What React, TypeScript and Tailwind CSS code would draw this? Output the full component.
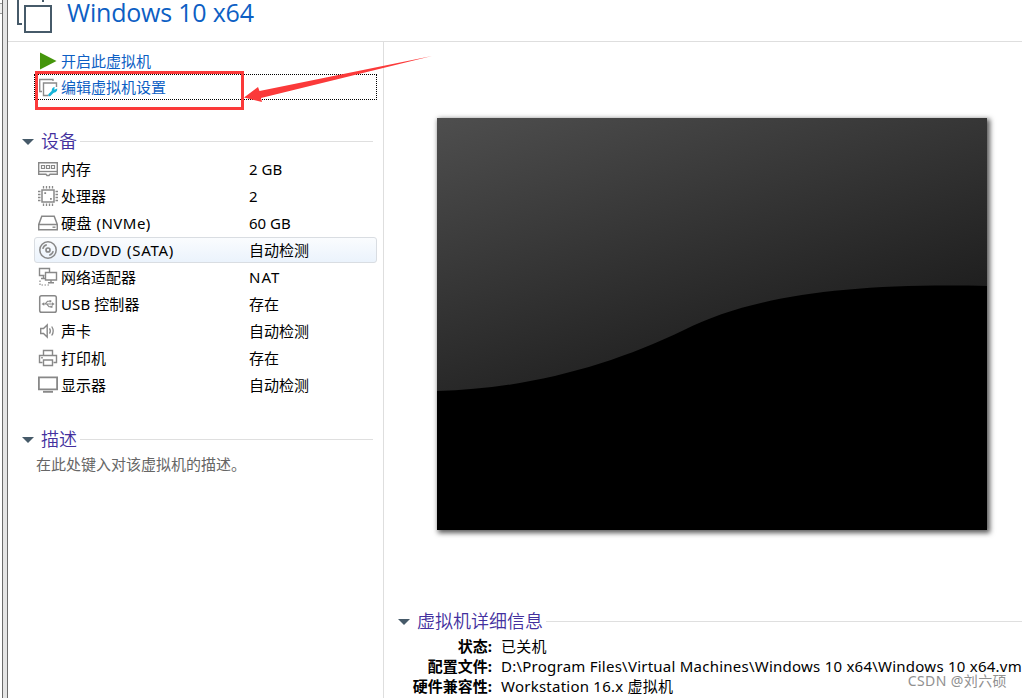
import type { ReactNode } from "react";

const UI_FONT = "font-['Noto_Sans','Noto_Sans_CJK_SC',sans-serif]";

type IconName =
  | "memory"
  | "cpu"
  | "disk"
  | "disc"
  | "network"
  | "usb"
  | "sound"
  | "printer"
  | "display";

interface Device {
  icon: IconName;
  name: string;
  value: string;
  selected?: boolean;
  nameClass?: string;
  valueClass?: string;
}

const devices: Device[] = [
  { icon: "memory", name: "内存", value: "2 GB" },
  { icon: "cpu", name: "处理器", value: "2" },
  { icon: "disk", name: "硬盘 (NVMe)", value: "60 GB", nameClass: "tracking-[0.5px]" },
  {
    icon: "disc",
    name: "CD/DVD (SATA)",
    value: "自动检测",
    selected: true,
    nameClass: "tracking-[0.75px]",
  },
  { icon: "network", name: "网络适配器", value: "NAT", valueClass: "tracking-[1px]" },
  { icon: "usb", name: "USB 控制器", value: "存在", nameClass: "tracking-[0.1px]" },
  { icon: "sound", name: "声卡", value: "自动检测" },
  { icon: "printer", name: "打印机", value: "存在" },
  { icon: "display", name: "显示器", value: "自动检测" },
];

const details = [
  { label: "状态:", value: "已关机" },
  {
    label: "配置文件:",
    value: "D:\\Program Files\\Virtual Machines\\Windows 10 x64\\Windows 10 x64.vm",
  },
  { label: "硬件兼容性:", value: "Workstation 16.x 虚拟机" },
];

const glyphs: Record<IconName, ReactNode> = {
  memory: (
    <>
      <path d="M.7 3.700h18.600v11.600H12l-1 1.200H9l-1-1.200H.7z" strokeWidth="1.4" />
      <path d="M3.500 6.500h3v3h-3zM8.500 6.500h3v3h-3zM13.500 6.500h3v3h-3z" strokeWidth="1.2" />
      <path d="M1 12.500h18" strokeWidth="1.3" />
    </>
  ),
  cpu: (
    <>
      <path d="M4 4h12v12H4z" strokeWidth="1.5" />
      <path
        d="M5.500 0v2.500M8.500 0v2.500M11.500 0v2.500M14.500 0v2.500M5.500 17.500V20M8.500 17.500V20M11.500 17.500V20M14.500 17.500V20M0 5.500h2.500M0 8.500h2.500M0 11.500h2.500M0 14.500h2.500M17.500 5.500H20M17.500 8.500H20M17.500 11.500H20M17.500 14.500H20"
        strokeWidth="1.3"
      />
      <path d="M6.300 6.300h1.800v1.800H6.300zM12 12h1.800v1.800H12z" fill="#888" stroke="none" />
    </>
  ),
  disk: (
    <>
      <path d="M3.800 3.200h12.400l3.100 8.300v5.200H.7v-5.200zM.7 11.500h18.600" strokeWidth="1.5" />
      <path d="M14.500 14.200h3" strokeWidth="1.4" />
    </>
  ),
  disc: (
    <>
      <circle cx="10" cy="10" r="8.200" strokeWidth="1.5" />
      <circle cx="10" cy="10" r="2" strokeWidth="1.7" />
      <path d="M4.800 8.800a5.400 5.400 0 0 1 4-4M15.200 11.200a5.400 5.400 0 0 1-4 4" strokeWidth="1.5" />
    </>
  ),
  network: (
    <>
      <path d="M6.500 8.500h-5v-7h10v3.500M5.500 9v2.500M3 11.500h4" strokeWidth="1.4" />
      <path d="M7.500 5.500h11v7.500h-11zM13 13v3M10 15.800h6" strokeWidth="1.4" />
      <path d="M2 13.500v4.500h10" strokeWidth="1.2" strokeDasharray="1.5 1.5" />
    </>
  ),
  usb: (
    <>
      <rect x="1.700" y="1.700" width="16.600" height="16.600" rx="1.800" strokeWidth="1.5" />
      <path d="M5 10h10M7 10l2.500-2.700h2M8.500 10l2.500 2.700h2" strokeWidth="1.1" />
      <path
        d="m3.500 10 2.700-1.800v3.600zM14 8.300l2.700 1.700-2.700 1.700zM11.300 6.200h2v2h-2zM12.500 11.700h2v2h-2z"
        fill="#888"
        stroke="none"
      />
    </>
  ),
  sound: (
    <>
      <path d="M2.700 7.500h2.800l3.700-3.500v12l-3.700-3.500H2.700z" strokeWidth="1.4" />
      <path d="M11.500 7.300q1.700 2.700 0 5.400M13.700 5.500q3 4.500 0 9" strokeWidth="1.3" />
    </>
  ),
  printer: (
    <>
      <path d="M5.500 7.500v-5h9v5M4.500 14.500h-3v-7h17v7h-3" strokeWidth="1.4" />
      <path d="M5.500 12h9v5.500h-9zM3.200 9.800h1.600" strokeWidth="1.4" />
    </>
  ),
  display: (
    <>
      <path d="M.9 2.400h18.200v12H.9z" strokeWidth="1.8" />
      <path d="M5 16.800h10" strokeWidth="1.900" />
    </>
  ),
};

function DeviceIcon({ name }: { name: IconName }) {
  return (
    <svg viewBox="0 0 20 20" className="h-5 w-5 shrink-0" fill="none" stroke="#888888">
      {glyphs[name]}
    </svg>
  );
}

function SectionTitle({ children }: { children: string }) {
  return (
    <div className="flex h-6 items-center">
      <svg viewBox="0 0 12 6" className="mt-px h-1.5 w-3 shrink-0">
        <path d="M0 0h12L6 6z" fill="#465a69" />
      </svg>
      <h2 className="ml-[7px] shrink-0 text-[18px] leading-6 font-[350] text-[#43309e]">
        {children}
      </h2>
      <div className="ml-[3px] h-px flex-1 bg-[#dfdfdf]" />
    </div>
  );
}

function DeviceRow({ device }: { device: Device }) {
  return (
    <div
      className={
        device.selected
          ? "mb-px flex h-[26px] items-center rounded-[3px] border border-[#d9dde2] bg-linear-to-b from-[#fafcfe] to-[#ebf3fc] pl-[3px]"
          : "mb-px flex h-[26px] items-center pl-1"
      }
    >
      <DeviceIcon name={device.icon} />
      <span className={`ml-[3px] w-[188px] text-[15px] ${device.nameClass ?? ""}`}>
        {device.name}
      </span>
      <span className={`text-[15px] ${device.valueClass ?? ""}`}>{device.value}</span>
    </div>
  );
}

function Header() {
  return (
    <header className="flex h-[42px] shrink-0 border-b border-[#dedede]">
      <svg
        viewBox="0 0 46 34"
        className="ml-1 h-[34px] w-[46px]"
        fill="none"
        stroke="#465a69"
        strokeWidth="2"
      >
        <path d="M6 0v24h4M31 0v2" />
        <path d="M13 6h26v26H13z" />
      </svg>
      <h1 className="ml-[9px] h-[26px] font-['Open_Sans',sans-serif] text-[25px] leading-[25px] tracking-[-0.2px] text-[#0d5fc4]">
        Windows 10 x64
      </h1>
    </header>
  );
}

function Actions() {
  return (
    <div className="relative pt-[7px] text-[15px] text-[#0d5fc4]">
      <div className="flex h-[25px] items-center pb-px">
        <svg viewBox="0 0 18 18" className="ml-8 h-[18px] w-[18px]">
          <path d="M0 .5 16.500 9 0 17.500z" fill="#45960c" />
        </svg>
        <span className="ml-[3px]">开启此虚拟机</span>
      </div>
      <div className="mb-px ml-[26px] flex h-[26px] w-[343px] items-center border border-dotted border-black pl-1">
        <svg viewBox="0 0 19 19" className="h-[19px] w-[19px]" fill="none">
          <path
            d="M3 13.500H.7V1.500H14V3M9.500 17.500h-5V5h13v4"
            stroke="#8b8b8b"
            strokeWidth="1.4"
          />
          <path d="m10.500 17 4-4" stroke="#14b4d8" strokeWidth="2.5" strokeLinecap="round" />
          <path
            d="M18.200 10.500a3.300 3.300 0 0 1-5 3.500 3.300 3.300 0 0 1 2.500-5l-.5 2.800z"
            fill="#14b4d8"
          />
        </svg>
        <span className="ml-[3px]">编辑虚拟机设置</span>
      </div>
      <div className="absolute top-[29px] left-[27px] h-[39px] w-[209px] border-3 border-[#fb3a3a]" />
      <svg viewBox="0 0 190 52" className="absolute top-[12px] left-[236px] z-10 h-[52px] w-[190px]">
        <path d="M0 43.500 14 33l1.500 4L188 2 17 44l1 4z" fill="#fb3a3a" />
      </svg>
    </div>
  );
}

function Preview() {
  return (
    <svg
      viewBox="0 0 550 412"
      className="ml-[53px] h-[412px] w-[550px] shadow-[2px_2px_5px_1px_rgba(0,0,0,0.65)]"
    >
      <defs>
        <linearGradient id="screen" gradientUnits="userSpaceOnUse" x1="0" y1="0" x2="106" y2="331">
          <stop offset="0" stopColor="#4e4e4e" />
          <stop offset="1" stopColor="#1c1c1c" />
        </linearGradient>
      </defs>
      <path d="M0 0h550v412H0z" fill="url(#screen)" />
      <path d="M0 273C90 271 175 247 247 212C315 178 410 165 550 168V412H0z" fill="#000" />
    </svg>
  );
}

function Details() {
  return (
    <section className="mt-[79px] ml-3.5">
      <SectionTitle>虚拟机详细信息</SectionTitle>
      <dl className="mt-[3px] text-[15px] leading-5">
        {details.map((item) => (
          <div key={item.label} className="flex h-5 whitespace-nowrap">
            <dt className="w-[94px] shrink-0 text-right font-bold">{item.label}</dt>
            <dd className="ml-[9px] tracking-[0.24px]">{item.value}</dd>
          </div>
        ))}
      </dl>
    </section>
  );
}

function WindowEdge() {
  return (
    <div className="flex w-2 shrink-0">
      <div className="w-0.5">
        <div className="mt-[3px] h-[11px] border-y border-[#9a9a9a] bg-[#f0f0f0]" />
      </div>
      <div className="flex-1 border-x border-[#6c6c6c] bg-[#e5e5e5]" />
    </div>
  );
}

export default function App() {
  return (
    <div
      className={`${UI_FONT} relative flex h-[698px] w-[1022px] overflow-hidden bg-white text-black`}
    >
      <WindowEdge />
      <div className="flex min-w-0 flex-1 flex-col">
        <Header />
        <div className="flex min-h-0 flex-1">
          <aside className="w-[376px] shrink-0 border-r border-[#dedede]">
            <Actions />
            <section className="mt-[29px] ml-3.5 w-[351px]">
              <SectionTitle>设备</SectionTitle>
              <div className="mt-[3px] ml-3 w-[343px]">
                {devices.map((device) => (
                  <DeviceRow key={device.name} device={device} />
                ))}
              </div>
            </section>
            <section className="mt-[29px] ml-3.5 w-[351px]">
              <SectionTitle>描述</SectionTitle>
              <p className="mt-0.5 ml-3.5 text-[15px] text-[#666]">在此处键入对该虚拟机的描述。</p>
            </section>
          </aside>
          <main className="min-w-0 flex-1 pt-[76px]">
            <Preview />
            <Details />
          </main>
        </div>
      </div>
      <div className="absolute right-[15px] bottom-[7px] text-[14px] leading-5 tracking-[0.4px] text-[#909090]">
        CSDN @刘六硕
      </div>
    </div>
  );
}
